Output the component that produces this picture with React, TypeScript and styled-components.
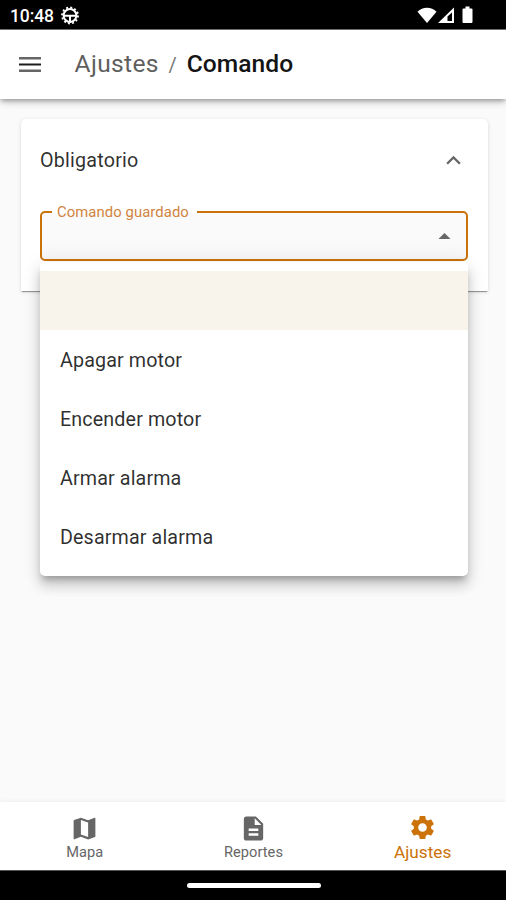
import React from 'react';
import styled, { createGlobalStyle } from 'styled-components';

const ACCENT = '#cb7209';

const GlobalStyle = createGlobalStyle`
  *, *::before, *::after { box-sizing: border-box; }
  body { margin: 0; background: #fafafa; font-family: Roboto, "Liberation Sans", sans-serif; }
`;

const Screen = styled.div`
  display: flex;
  flex-direction: column;
  width: 100%;
  height: 900px;
  overflow: hidden;
  background: #fafafa;
  color: rgba(0, 0, 0, 0.83);
`;

const StatusBar = styled.div`
  display: flex;
  align-items: center;
  flex: 0 0 30px;
  padding: 2px 32px 0 10px;
  background: #000;
  color: #fff;
  border-bottom: 1px solid #777;
`;

const Clock = styled.span`
  font-size: 17.5px;
  line-height: 20px;
  font-weight: 500;
  letter-spacing: -0.1px;
  margin-right: 7px;
`;

const StatusIcons = styled.div`
  display: flex;
  align-items: center;
  margin: -2px 0 0 auto;
`;

const AppBar = styled.header`
  display: flex;
  align-items: center;
  flex: 0 0 69px;
  padding: 0 15px;
  background: #fff;
  position: relative;
  box-shadow: 0 2px 5px -1px rgba(0, 0, 0, 0.35), 0 4px 6px rgba(0, 0, 0, 0.11), 0 1px 12px rgba(0, 0, 0, 0.08);
`;

const Crumbs = styled.nav`
  display: flex;
  align-items: center;
  margin: -1px 0 0 29.5px;
  font-size: 24.6px;
  line-height: 36px;
`;

const Crumb = styled.span<{ $current?: boolean }>`
  font-weight: ${(p) => (p.$current ? 500 : 400)};
  color: ${(p) => (p.$current ? '#141414' : '#5f5f5f')};
  letter-spacing: ${(p) => (p.$current ? '0.05px' : '0.35px')};
`;

const Slash = styled.span`
  font-size: 20px;
  color: #777;
  margin: 2px 10px 0 9.5px;
`;

const Content = styled.main`
  flex: 1;
  padding: 20px 18px 0 21px;
`;

const Card = styled.section`
  height: 172px;
  padding: 0 20px 0 19px;
  background: #fff;
  border-radius: 5px 5px 0 0;
  box-shadow: 0 2px 1px -1px rgba(0, 0, 0, 0.3), 0 1px 1px rgba(0, 0, 0, 0.12), 0 1px 4px rgba(0, 0, 0, 0.12);
`;

const CardHeader = styled.div`
  display: flex;
  align-items: center;
  justify-content: space-between;
  height: 84px;
  padding-bottom: 1px;
  font-size: 19.7px;
  letter-spacing: 0.22px;
`;

const Select = styled.div`
  position: relative;
  margin-top: 8px;
`;

const Field = styled.fieldset`
  display: flex;
  align-items: flex-end;
  justify-content: flex-end;
  min-width: 0;
  height: 58px;
  margin: -8px 0 0;
  padding: 0 7px 8px 10px;
  border: 2px solid ${ACCENT};
  border-radius: 5px;
  background: linear-gradient(#fafafa 60%, #f6f6f6);
`;

const Legend = styled.legend`
  height: 18px;
  padding: 0 8px 0 5px;
  font-size: 14.8px;
  line-height: 18px;
  letter-spacing: 0.1px;
  color: #d18340;
`;

const Menu = styled.ul`
  position: absolute;
  top: 59px;
  left: 0;
  right: 0;
  z-index: 2;
  margin: 0;
  padding: 9px 0 10px;
  list-style: none;
  background: #fff;
  border-radius: 5px;
  box-shadow: 0 6px 6px -3px rgba(0, 0, 0, 0.25), 0 10px 12px 1px rgba(0, 0, 0, 0.12), 0 4px 17px 2px rgba(0, 0, 0, 0.1);
`;

const Option = styled.li<{ $selected?: boolean }>`
  display: flex;
  align-items: center;
  height: 59px;
  padding: 2px 20px 0;
  font-size: 19.7px;
  letter-spacing: 0.13px;
  background: ${(p) => (p.$selected ? '#f8f4ec' : 'transparent')};
`;

const BottomNav = styled.nav`
  display: grid;
  grid-template-columns: repeat(3, 1fr);
  flex: 0 0 68px;
  background: #fff;
  box-shadow: 0 -1px 4px rgba(0, 0, 0, 0.05);
`;

const NavItem = styled.div<{ $active?: boolean }>`
  display: flex;
  flex-direction: column;
  align-items: center;
  padding: ${(p) => (p.$active ? '11px 0 0 2px' : '12px 0 0 1px')};
  color: ${(p) => (p.$active ? ACCENT : '#666')};
  font-size: ${(p) => (p.$active ? '17.2px' : '14.6px')};
  letter-spacing: ${(p) => (p.$active ? '0' : '0.05px')};
  line-height: ${(p) => (p.$active ? '20px' : '18px')};
`;

const GestureBar = styled.div`
  display: flex;
  justify-content: center;
  flex: 0 0 30px;
  padding-top: 12px;
  background: #000;
  border-top: 1px solid #555;
`;

const Handle = styled.div`
  width: 134px;
  height: 5px;
  margin-left: 1px;
  border-radius: 3px;
  background: #fff;
`;

type IconProps = { d: string; size?: number; color?: string };

const Icon = ({ d, size = 29, color = 'currentColor' }: IconProps) => (
  <svg width={size} height={size} viewBox="0 0 24 24" fill={color}>
    <path d={d} />
  </svg>
);

const MenuIcon = () => (
  <svg width="30" height="30" viewBox="0 0 30 30">
    <path d="M4 7h22v2.500H4zM4 19.500h22V22H4z" fill="#666" />
    <path d="M4 13.500h22v2H4z" fill="#1c1c1c" />
  </svg>
);

const PATHS = {
  expandLess: 'M12 8l-6 6 1.41 1.41L12 10.83l4.59 4.58L18 14z',
  dropUp: 'M7 14l5-5 5 5z',
  map: 'M20.5 3l-.16.03L15 5.1 9 3 3.36 4.9c-.21.07-.36.25-.36.48V20.5c0 .28.22.5.5.5l.16-.03L9 18.9l6 2.1 5.64-1.9c.21-.07.36-.25.36-.48V3.5c0-.28-.22-.5-.5-.5zM15 19l-6-2.11V5l6 2.11V19z',
  report: 'M14 2H6c-1.1 0-1.99.9-1.99 2L4 20c0 1.1.89 2 1.99 2H18c1.1 0 2-.9 2-2V8l-6-6zm2 16H8v-2h8v2zm0-4H8v-2h8v2zm-3-5V3.5L18.5 9H13z',
  settings:
    'M19.14 12.94c.04-.3.06-.61.06-.94 0-.32-.02-.64-.07-.94l2.03-1.58c.18-.14.23-.41.12-.61l-1.92-3.32c-.12-.22-.37-.29-.59-.22l-2.39.96c-.5-.38-1.03-.7-1.62-.94l-.36-2.54c-.04-.24-.24-.41-.48-.41h-3.84c-.24 0-.43.17-.47.41l-.36 2.54c-.59.24-1.13.57-1.62.94l-2.39-.96c-.22-.08-.47 0-.59.22L2.74 8.87c-.12.21-.08.47.12.61l2.03 1.58c-.05.3-.09.63-.09.94s.02.64.07.94l-2.03 1.58c-.18.14-.23.41-.12.61l1.92 3.32c.12.22.37.29.59.22l2.39-.96c.5.38 1.03.7 1.62.94l.36 2.54c.05.24.24.41.48.41h3.84c.24 0 .44-.17.47-.41l.36-2.54c.59-.24 1.13-.56 1.62-.94l2.39.96c.22.08.47 0 .59-.22l1.92-3.32c.12-.22.07-.47-.12-.61l-2.01-1.58zM12 15.6c-1.98 0-3.6-1.62-3.6-3.6s1.62-3.6 3.6-3.6 3.6 1.62 3.6 3.6-1.62 3.6-3.6 3.6z',
};

const WheelIcon = () => (
  <svg width="18" height="20" viewBox="0 0 18 20" fill="none" stroke="#fff">
    <circle cx="9" cy="9.5" r="8" strokeWidth="1.8" strokeDasharray="2 2.189" />
    <circle cx="9" cy="9.5" r="6.4" strokeWidth="2" />
    <path d="M3 9.700h12M9 9.700v6.500" strokeWidth="2" />
  </svg>
);

const SignalIcons = () => (
  <svg width="58" height="20" viewBox="0 0 58 20" fill="#fff">
    <path d="M1.500 6.7C6.500 1.3 15.500 1.3 20.500 6.700L11 18z" />
    <path d="M22 18L38 2.500v15.500z" />
    <path d="M36 7.500v8.500h-4.500v-4.500z" fill="#000" />
    <path d="M47.500 3.500h2V1.500h4v2h2q1 0 1 1v12.500q0 1-1 1h-8q-1 0-1-1V4.500q0-1 1-1z" />
  </svg>
);

const OPTIONS = ['', 'Apagar motor', 'Encender motor', 'Armar alarma', 'Desarmar alarma'];

export default function App() {
  return (
    <>
      <GlobalStyle />
      <Screen>
        <StatusBar>
          <Clock>10:48</Clock>
          <WheelIcon />
          <StatusIcons>
            <SignalIcons />
          </StatusIcons>
        </StatusBar>
        <AppBar>
          <MenuIcon />
          <Crumbs>
            <Crumb>Ajustes</Crumb>
            <Slash>/</Slash>
            <Crumb $current>Comando</Crumb>
          </Crumbs>
        </AppBar>
        <Content>
          <Card>
            <CardHeader>
              Obligatorio
              <Icon d={PATHS.expandLess} color="#666" />
            </CardHeader>
            <Select>
              <Field>
                <Legend>Comando guardado</Legend>
                <Icon d={PATHS.dropUp} color="#666" />
              </Field>
              <Menu>
                {OPTIONS.map((label, i) => (
                  <Option key={i} $selected={i === 0}>
                    {label}
                  </Option>
                ))}
              </Menu>
            </Select>
          </Card>
        </Content>
        <BottomNav>
          <NavItem>
            <Icon d={PATHS.map} />
            Mapa
          </NavItem>
          <NavItem>
            <Icon d={PATHS.report} />
            Reportes
          </NavItem>
          <NavItem $active>
            <Icon d={PATHS.settings} />
            Ajustes
          </NavItem>
        </BottomNav>
        <GestureBar>
          <Handle />
        </GestureBar>
      </Screen>
    </>
  );
}
